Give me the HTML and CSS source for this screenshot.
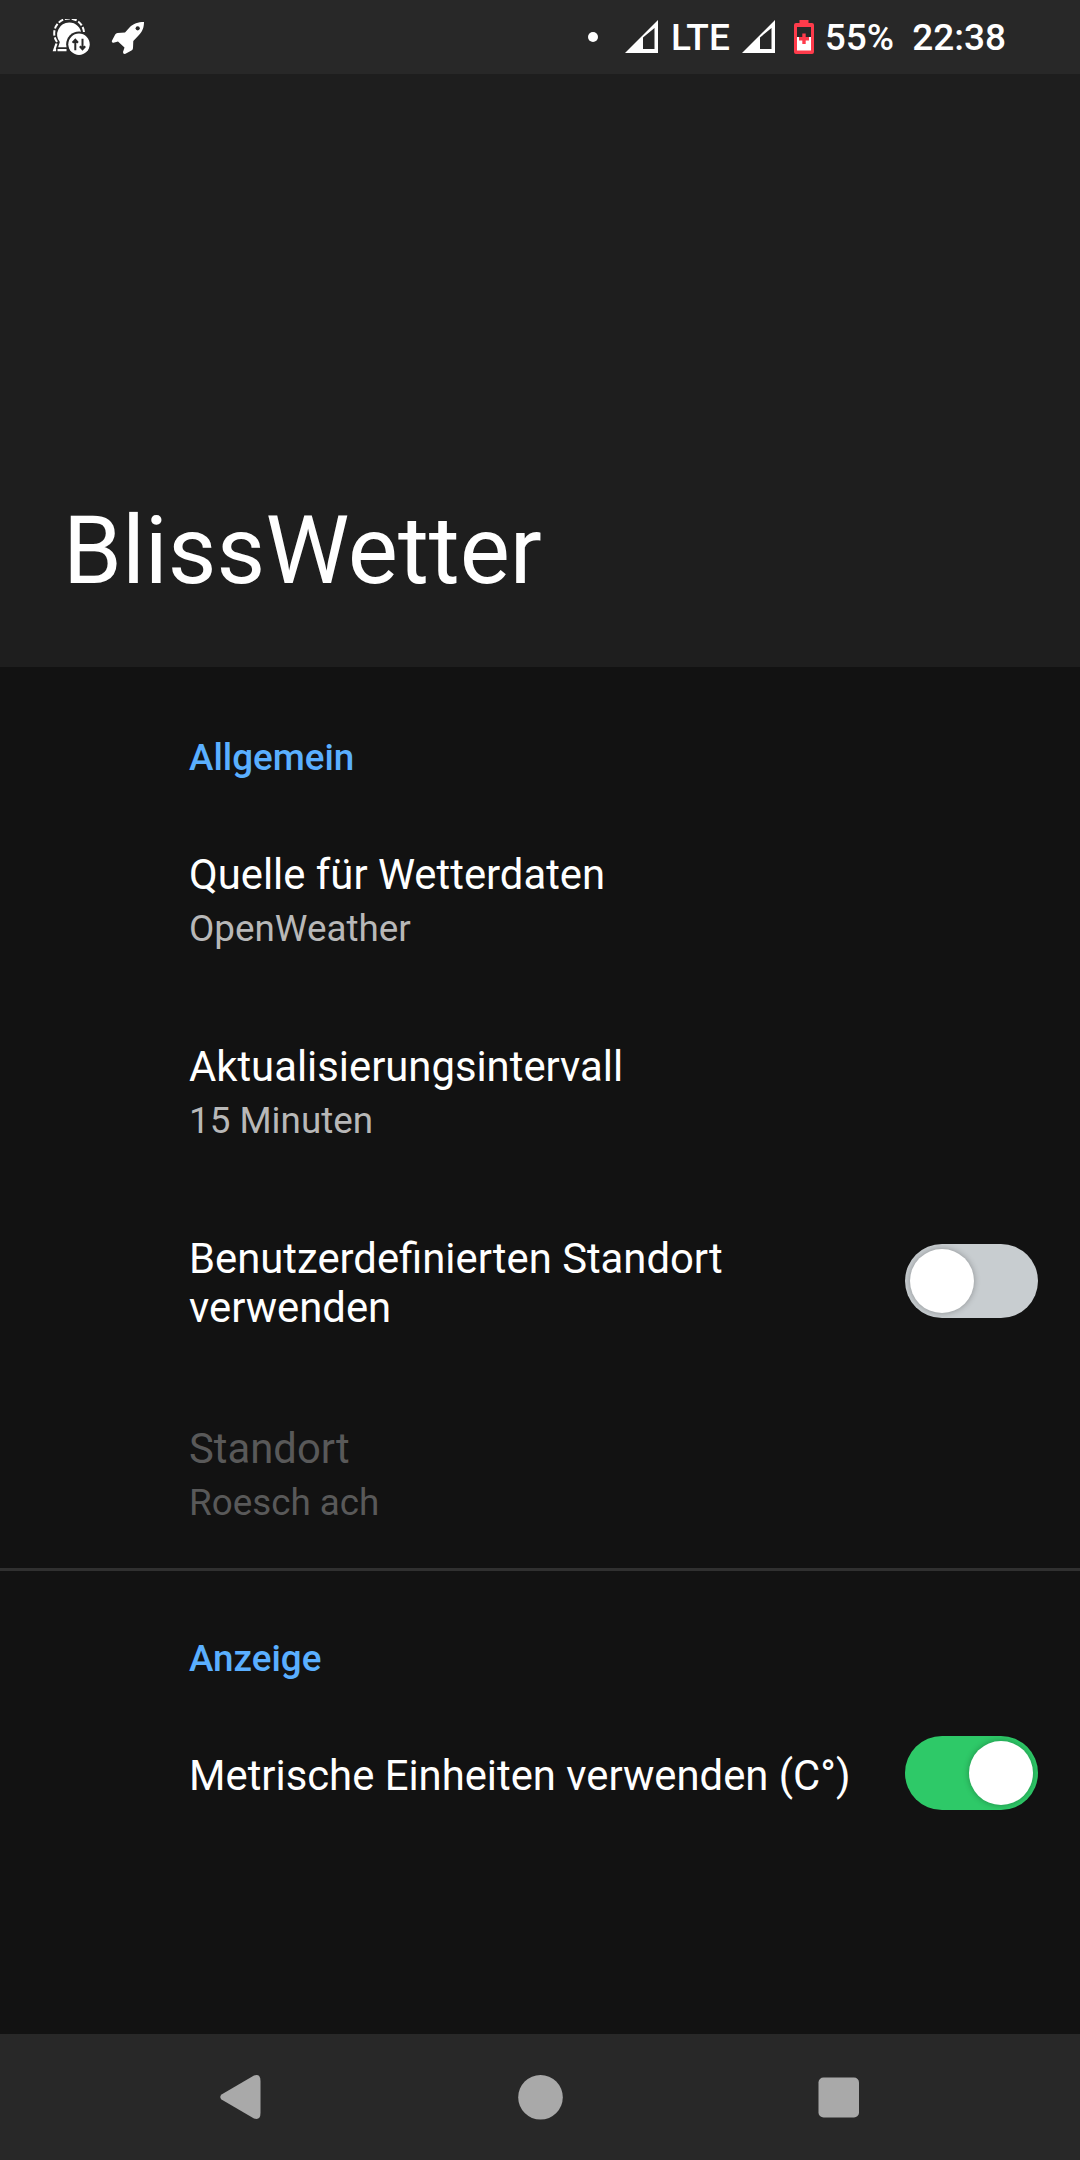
FILE: index.html
```html
<!DOCTYPE html>
<html lang="de">
<head>
    <meta charset="UTF-8">
    <meta name="viewport" content="width=device-width, initial-scale=1.0">
    <title>BlissWetter</title>
    <link rel="stylesheet" href="styles.css">
</head>
<body>

<div class="screen">
    <!-- Statusleiste -->
    <div class="statusbar">
        <div class="notifications">
            <svg class="icon-chat" width="40" height="37" viewBox="0 0 40 37">
                <path d="M5 23 A14.900 14.900 0 1 1 32 13.500" fill="none" stroke="#fff" stroke-width="2" stroke-dasharray="5.200 1.800"/>
                <path d="M4.500 24.500 L2.200 31.200 L15 31.200" fill="none" stroke="#fff" stroke-width="2.200" stroke-dasharray="9 1.400"/>
                <path d="M17.300 3.600 A12 12 0 0 0 7.800 23 L6.200 28.200 L17 28.200 L29.300 15.500 A12 12 0 0 0 17.300 3.600Z" fill="#fff"/>
                <circle cx="27" cy="25.300" r="12.800" fill="#282828"/>
                <circle cx="27" cy="25.300" r="10.700" fill="#fff"/>
                <path d="M23.300 31.300 V21 M20.600 23.700 L23.300 20.800 L26 23.700 M30.500 19.800 V30 M27.800 27.300 L30.500 30.200 L33.200 27.300" fill="none" stroke="#282828" stroke-width="2"/>
            </svg>
            <svg class="icon-rocket" width="34" height="34" viewBox="0 0 34 34">
                <path d="M33 1 C27 1 22.500 2.500 18.500 6.500 L14 11.500 L6.500 12 Q5 12.300 4.200 13.500 L0.800 20 Q0.500 22 2.500 21.800 L7 20.500 L13.500 26.500 L12 31 Q12 33.500 14.500 32.800 L20.500 29.500 Q22 28.500 22 27 L22.300 20 L27.500 14.500 C31.500 10.500 33 6.500 33 1Z" fill="#fff"/>
                <circle cx="26.700" cy="7.300" r="2.100" fill="#282828"/>
            </svg>
        </div>
        <div class="status">
            <span class="dot"></span>
            <svg class="signal" width="34" height="33" viewBox="0 0 34 33">
                <path d="M0 33 L33 0 V33Z M18 17.500 V29 H29.500 V8Z" fill="#fff" fill-rule="evenodd"/>
            </svg>
            <span class="network">LTE</span>
            <svg class="signal signal-second" width="34" height="33" viewBox="0 0 34 33">
                <path d="M0 33 L33 0 V33Z M18 17.500 V29 H29.500 V8Z" fill="#fff" fill-rule="evenodd"/>
            </svg>
            <svg class="battery" width="20" height="34" viewBox="0 0 20 34">
                <path d="M5.500 0 H14.500 V3 H18 Q20 3 20 5 V32 Q20 34 18 34 H2 Q0 34 0 32 V5 Q0 3 2 3 H5.500Z" fill="#ff3b4b"/>
                <path d="M3 7 H17 V17 H3Z" fill="#282828"/>
                <path d="M3 17 H17 V30.500 H3Z" fill="#fff"/>
                <path d="M8.300 13.500 H11.700 V17 H15 V20.500 H11.700 V24 H8.300 V20.500 H5 V17 H8.300Z" fill="#ff3b4b"/>
            </svg>
            <span class="percent">55%</span>
            <span class="clock">22:38</span>
        </div>
    </div>

    <header class="header">
        <h1 class="title">BlissWetter</h1>
    </header>

    <!-- Einstellungen -->
    <main class="settings">
        <section class="group">
            <h2 class="category">Allgemein</h2>
            <div class="item">
                <div class="item-text">
                    <div class="item-title">Quelle für Wetterdaten</div>
                    <div class="item-summary">OpenWeather</div>
                </div>
            </div>
            <div class="item">
                <div class="item-text">
                    <div class="item-title">Aktualisierungsintervall</div>
                    <div class="item-summary">15 Minuten</div>
                </div>
            </div>
            <div class="item">
                <div class="item-text">
                    <div class="item-title">Benutzerdefinierten Standort verwenden</div>
                </div>
                <div class="switch"><span class="thumb"></span></div>
            </div>
            <div class="item disabled">
                <div class="item-text">
                    <div class="item-title">Standort</div>
                    <div class="item-summary">Roesch ach</div>
                </div>
            </div>
        </section>

        <section class="group">
            <h2 class="category">Anzeige</h2>
            <div class="item compact">
                <div class="item-text">
                    <div class="item-title">Metrische Einheiten verwenden (C°)</div>
                </div>
                <div class="switch on"><span class="thumb"></span></div>
            </div>
        </section>
    </main>

    <!-- Navigationsleiste -->
    <nav class="navbar">
        <svg width="60" height="60" viewBox="0 0 60 60">
            <path d="M11.500 27.500 L44 8.500 Q50.500 6.500 50.500 14 V46 Q50.500 53.500 44 51.500 L11.500 32.500 Q9 30 11.500 27.500Z" fill="#a9a9a9"/>
        </svg>
        <svg width="60" height="60" viewBox="0 0 60 60">
            <circle cx="30.500" cy="30.300" r="22.300" fill="#a9a9a9"/>
        </svg>
        <svg width="60" height="60" viewBox="0 0 60 60">
            <rect x="8.500" y="10.500" width="40.500" height="40" rx="5" fill="#a9a9a9"/>
        </svg>
    </nav>
</div>

</body>
</html>
```
FILE: styles.css
```css
* {
    box-sizing: border-box;
}
body {
    margin: 0;
    background-color: #121212;
    color: #fff;
    font-family: Roboto, sans-serif;
}
.screen {
    display: flex;
    flex-direction: column;
    width: 1080px;
    height: 2160px;
}
.statusbar {
    display: flex;
    justify-content: space-between;
    height: 74px;
    padding: 0 74px 0 52px;
    background-color: #282828;
}
.notifications,
.status {
    display: flex;
    align-items: flex-start;
}
.icon-chat {
    margin-top: 19px;
}
.icon-rocket {
    margin: 21px 0 0 19px;
}
.dot {
    width: 10px;
    height: 10px;
    margin: 32px 27px 0 0;
    border-radius: 50%;
    background-color: #fff;
}
.signal {
    margin: 20px 12px 0 0;
}
.signal-second {
    margin: 20px 18px 0 12px;
}
.battery {
    margin-top: 20px;
}
.network,
.percent,
.clock {
    height: 44px;
    margin-top: 16px;
    font-size: 37px;
    font-weight: 500;
    line-height: 44px;
}
.percent {
    margin-left: 11px;
}
.clock {
    margin-left: 18px;
}
.header {
    display: flex;
    align-items: flex-end;
    height: 593px;
    padding: 0 63px 60px;
    background-color: #1e1e1e;
}
.title {
    margin: 0;
    font-size: 94.5px;
    font-weight: 400;
    line-height: 112px;
}
.settings {
    flex: 1;
}
.group + .group {
    margin-top: -2px;
    border-top: 3px solid #303030;
}
.category {
    height: 137px;
    margin: 0;
    padding: 69px 0 0 189px;
    color: #5aafff;
    font-size: 36.8px;
    font-weight: 500;
    line-height: 43px;
}
.group + .group .category {
    height: 134px;
    padding-top: 66px;
}
.item {
    display: flex;
    align-items: center;
    padding: 46px 42px 46px 189px;
}
.item.compact {
    padding-top: 31px;
    padding-bottom: 31px;
}
.item-text {
    flex: 1;
}
.item-title {
    font-size: 41.8px;
    line-height: 49px;
}
.item-summary {
    margin-top: 8px;
    color: #b8b8b8;
    font-size: 36.8px;
    line-height: 43px;
}
.disabled .item-title,
.disabled .item-summary {
    color: #595959;
}
.switch {
    display: flex;
    align-items: center;
    width: 133px;
    height: 74px;
    margin: 0 0 4px 42px;
    padding: 0 5px;
    border-radius: 37px;
    background-color: #c8cdd0;
}
.thumb {
    width: 64px;
    height: 64px;
    border-radius: 50%;
    background-color: #fff;
    box-shadow: 0 0 6px rgba(0, 0, 0, 0.3);
}
.switch.on {
    justify-content: flex-end;
    background-color: #2ec968;
}
.navbar {
    display: flex;
    justify-content: space-between;
    height: 126px;
    padding: 33px 210px 0;
    background-color: #282828;
}
```
